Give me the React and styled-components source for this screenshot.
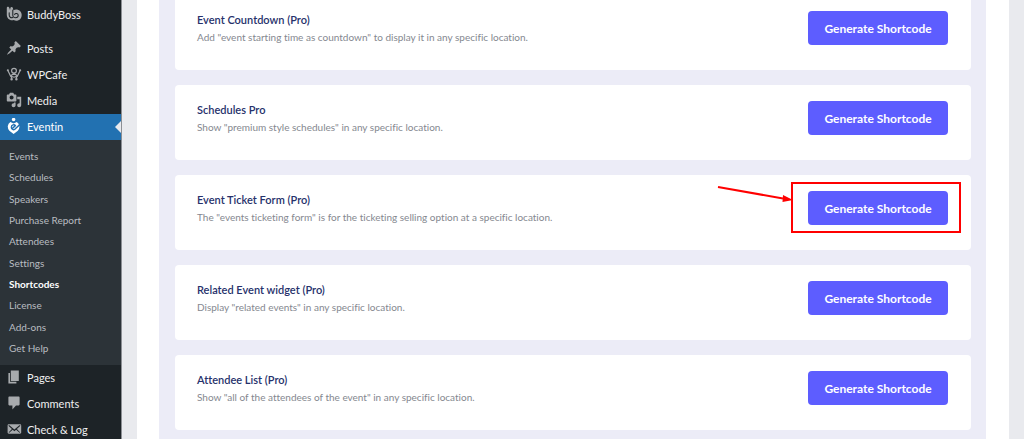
import React from 'react';
import styled, {createGlobalStyle} from 'styled-components';

const GlobalStyle = createGlobalStyle`
    * {
        box-sizing: border-box;
    }

    body {
        margin: 0;
        background-color: #e9eaee;
        font-family: Lato, 'Open Sans', sans-serif;
        font-variant-ligatures: none;
    }
`;

const Page = styled.div`
    display: flex;
    height: 100vh;
    overflow: hidden;
`;

const Sidebar = styled.nav`
    flex: none;
    width: 122px;
    padding-top: 2px;
    border-right: 1px solid #8c8f94;
    background-color: #1d2327;
`;

const MenuLink = styled.a`
    position: relative;
    display: flex;
    align-items: center;
    gap: 5px;
    height: 26px;
    padding: 0 0 2px 6px;
    margin-bottom: ${({$spaced}) => ($spaced ? '8px' : '0')};
    background-color: ${({$active}) => ($active ? '#2271b1' : 'transparent')};
    color: ${({$active}) => ($active ? '#fff' : '#f0f0f1')};
    font-size: 11px;
    text-decoration: none;
    white-space: nowrap;

    svg {
        flex: none;
        width: 16px;
        height: 16px;
        color: ${({$active}) => ($active ? '#fff' : '#a7aaad')};
    }

    &::after {
        content: '';
        display: ${({$active}) => ($active ? 'block' : 'none')};
        position: absolute;
        top: 7px;
        right: 0;
        border: 6px solid transparent;
        border-right-color: #e9eaee;
        border-left-width: 0;
    }
`;

const Submenu = styled.div`
    display: flex;
    flex-direction: column;
    justify-content: space-between;
    height: 225px;
    padding: 6px 9px 7px;
    background-color: #2c3338;
`;

const SubLink = styled.a`
    color: ${({$current}) => ($current ? '#fff' : '#b9bdc1')};
    font-size: 10px;
    font-weight: ${({$current}) => ($current ? 700 : 400)};
    line-height: 20px;
    text-decoration: none;
    white-space: nowrap;
`;

const Content = styled.main`
    flex: 1;
    min-width: 0;
    margin: 0 15px;
    padding: 0 23px 0 22px;
    background-color: #fff;
`;

const CardList = styled.div`
    display: flex;
    flex-direction: column;
    gap: 15px;
    margin-top: -5px;
    padding: 0 15px 24px 16px;
    background-color: #ececf7;
`;

const Card = styled.section`
    display: flex;
    align-items: flex-start;
    justify-content: space-between;
    min-height: 75px;
    padding: 16px 23px 16px 22px;
    border-radius: 4px;
    background-color: #fff;
`;

const CardTitle = styled.h3`
    margin: 0;
    color: #26316b;
    font-size: 11px;
    font-weight: 600;
    line-height: 18px;
`;

const CardText = styled.p`
    margin: 0;
    color: #85888f;
    font-size: 10px;
    line-height: 16px;
`;

const Action = styled.div`
    position: relative;
    flex: none;
`;

const Button = styled.button`
    display: block;
    height: 34px;
    width: 140px;
    padding: 0;
    border: none;
    border-radius: 4px;
    background-color: #5d5dff;
    color: #fff;
    font-family: inherit;
    font-size: 12px;
    font-weight: 700;
    cursor: pointer;
`;

const Frame = styled.div`
    position: absolute;
    top: -9px;
    right: -13px;
    bottom: -8px;
    left: -17px;
    border: 2px solid #ff0000;
    pointer-events: none;
`;

const Arrow = styled.svg`
    position: absolute;
    top: -9px;
    right: 155px;
    width: 80px;
    height: 24px;
    pointer-events: none;
`;

const icons = {
    buddyboss: (
        <>
            <path d='M1 2.500c0-2 2.600-2 3.200 0L5 5l.6-2.800c.6-1.600 2.600-1.400 3 .4l.6 2.600c4.800-2.200 10.400.6 10.400 6 0 6-5.600 8.600-10 6.400C5 19 1 15.500 1 11z' fill='currentColor' />
            <path d='M8.500 5v6.500c0 4.500 6.800 4.200 6.800.2 0-2.600-3.600-3.200-4.600-1.200M4 8.500v2.800c0 2.400 2 4 4.200 3.200' fill='none' stroke='#1d2327' strokeWidth='1.300' strokeLinecap='round' />
        </>
    ),
    posts: <path fill='currentColor' d='M10.44 3.02l1.82-1.82 6.36 6.35-1.83 1.82c-1.05-.68-2.48-.57-3.41.36l-.75.75c-.92.93-1.04 2.35-.35 3.41l-1.83 1.82-2.41-2.41-2.8 2.79c-.42.42-3.38 2.71-3.8 2.29s1.86-3.39 2.28-3.81l2.79-2.79L4.1 9.36l1.83-1.82c1.05.69 2.48.57 3.4-.36l.75-.75c.93-.92 1.05-2.35.36-3.41z' />,
    wpcafe: (
        <g fill='none' stroke='currentColor' strokeWidth='1.500'>
            <circle cx='10' cy='6' r='3' />
            <path d='M2.500 6l3.200 6.500L10 9l4.300 3.500L17.500 6M5.700 12.500L10 14l4.300-1.500M6 12.500l1.500 3M14 12.500l-1.500 3' />
            <circle cx='2.300' cy='5.300' r='.6' />
            <circle cx='17.700' cy='5.300' r='.6' />
            <circle cx='7' cy='16.500' r='.8' />
            <circle cx='13' cy='16.500' r='.8' />
        </g>
    ),
    media: <path fill='currentColor' d='M13 11V4c0-.55-.45-1-1-1h-1.67L9 1H5L3.67 3H2c-.55 0-1 .45-1 1v7c0 .55.45 1 1 1h10c.55 0 1-.45 1-1zM7 4.5c1.38 0 2.5 1.12 2.5 2.5S8.38 9.5 7 9.5 4.5 8.38 4.5 7 5.62 4.5 7 4.5zM14 6h5v10.5c0 1.38-1.12 2.5-2.5 2.5S14 17.88 14 16.5s1.12-2.5 2.5-2.5c.17 0 .34.02.5.05V9h-3V6zm-4 8.05V13h2v3.5c0 1.38-1.12 2.5-2.5 2.5S7 17.88 7 16.5 8.12 14 9.5 14c.17 0 .34.02.5.05z' />,
    eventin: (
        <>
            <circle cx='9.500' cy='2' r='2.200' fill='currentColor' />
            <path d='M9.500 20l-5.300-4.200A7 7 0 0 1 5.500 5l4 2 4-2a7 7 0 0 1 1.300 10.800z' fill='currentColor' />
            <path d='M17.500 8l-6.500 6c-1.500 1.200-4.300.4-4.300-2.300 0-3.400 3.800-4 5-2.200L8 13' fill='none' stroke='#2271b1' strokeWidth='1.800' />
        </>
    ),
    pages: <path fill='currentColor' d='M6 15V2h10v13H6zm-1 1h8v2H3V5h2v11z' />,
    comments: <path fill='currentColor' d='M4 2h12c.6 0 1 .4 1 1v9c0 .6-.4 1-1 1h-3.500L8 18v-5H4c-.6 0-1-.4-1-1V3c0-.6.4-1 1-1z' />,
    mail: <path fill='currentColor' d='M19 14.500v-9c0-.83-.67-1.500-1.500-1.500H3.490c-.83 0-1.500.67-1.500 1.500v9c0 .83.67 1.500 1.500 1.500H17.500c.83 0 1.500-.67 1.500-1.500zm-1.310-9.110c.33.33.15.67-.03.84L13.600 9.950l3.900 4.060c.12.14.2.36.06.51-.13.16-.43.15-.56.05l-4.370-3.730-2.140 1.950-2.130-1.950-4.370 3.730c-.13.1-.43.11-.56-.05-.14-.15-.06-.37.06-.51l3.900-4.060-4.060-3.720c-.18-.17-.36-.51-.03-.84s.67-.17.95.07l6.240 5.040 6.250-5.040c.28-.24.62-.4.95-.07z' />
};

const menuTop = [
    {label: 'BuddyBoss', icon: 'buddyboss', spaced: true},
    {label: 'Posts', icon: 'posts'},
    {label: 'WPCafe', icon: 'wpcafe'},
    {label: 'Media', icon: 'media'},
    {label: 'Eventin', icon: 'eventin', active: true}
];

const submenu = ['Events', 'Schedules', 'Speakers', 'Purchase Report', 'Attendees', 'Settings', 'Shortcodes', 'License', 'Add-ons', 'Get Help'];

const menuBottom = [
    {label: 'Pages', icon: 'pages'},
    {label: 'Comments', icon: 'comments'},
    {label: 'Check & Log', icon: 'mail'}
];

const shortcodes = [
    {title: 'Event Countdown (Pro)', text: 'Add "event starting time as countdown" to display it in any specific location.'},
    {title: 'Schedules Pro', text: 'Show "premium style schedules" in any specific location.'},
    {title: 'Event Ticket Form (Pro)', text: 'The "events ticketing form" is for the ticketing selling option at a specific location.', marked: true},
    {title: 'Related Event widget (Pro)', text: 'Display "related events" in any specific location.'},
    {title: 'Attendee List (Pro)', text: 'Show "all of the attendees of the event" in any specific location.'}
];

const MenuItem = ({item}) => (
    <MenuLink href='#' $active={item.active} $spaced={item.spaced}>
        <svg viewBox='0 0 20 20' aria-hidden='true'>{icons[item.icon]}</svg>
        {item.label}
    </MenuLink>
);

const App = () => {
    return (
        <Page>
            <GlobalStyle />
            <Sidebar>
                {menuTop.map((item) => <MenuItem key={item.label} item={item} />)}
                <Submenu>
                    {submenu.map((label) => (
                        <SubLink key={label} href='#' $current={label === 'Shortcodes'}>{label}</SubLink>
                    ))}
                </Submenu>
                {menuBottom.map((item) => <MenuItem key={item.label} item={item} />)}
            </Sidebar>
            <Content>
                <CardList>
                    {shortcodes.map(({title, text, marked}) => (
                        <Card key={title}>
                            <div>
                                <CardTitle>{title}</CardTitle>
                                <CardText>{text}</CardText>
                            </div>
                            <Action>
                                <Button type='button'>Generate Shortcode</Button>
                                {marked && (
                                    <>
                                        <Frame />
                                        <Arrow viewBox='0 0 80 24' aria-hidden='true'>
                                            <path d='M5 5l65 11.500' stroke='#ff0000' strokeWidth='2' />
                                            <path d='M70 13l10 5-10.500 2z' fill='#ff0000' />
                                        </Arrow>
                                    </>
                                )}
                            </Action>
                        </Card>
                    ))}
                </CardList>
            </Content>
        </Page>
    );
};

export default App;
